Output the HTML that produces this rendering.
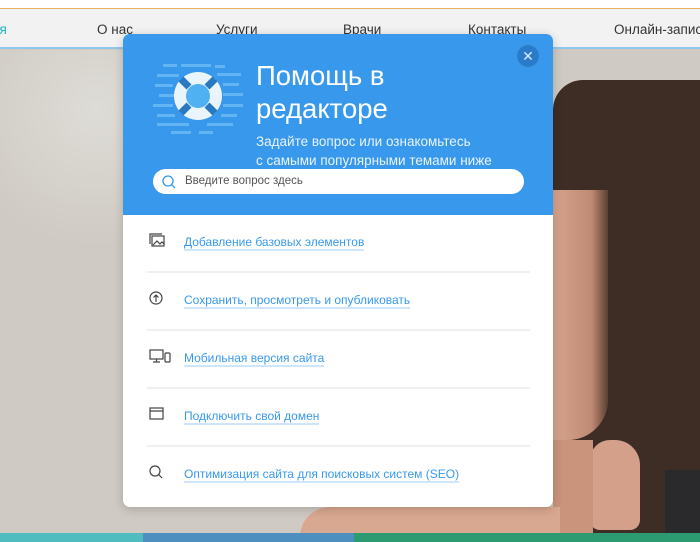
<!DOCTYPE html>
<html><head><meta charset="utf-8"><style>
*{margin:0;padding:0;box-sizing:border-box}
body{width:700px;height:542px;overflow:hidden;position:relative;font-family:"Liberation Sans",Arial,sans-serif;background:#cfcac3}
.abs{position:absolute}
.nav{left:0;top:8px;width:700px;height:41px;background:#f2f2f2;border-top:1px solid #e8b060;border-bottom:2px solid #8fc8ee;font-family:"Liberation Sans",sans-serif;font-size:13.5px;color:#333;white-space:nowrap}
.nav span{position:absolute;top:13px}
.modal{left:123px;top:34px;width:430px;height:473px;background:#fff;border-radius:7px;overflow:hidden;box-shadow:0 2px 10px rgba(0,0,0,.2)}
.hd{left:0;top:0;width:430px;height:181px;background:#3899ec}
.t1{left:133px;top:25px;color:#fff;font-size:27.5px;line-height:33px;font-weight:300}
.t2{left:133px;top:98px;color:#e8f3fd;font-size:13.5px;line-height:19px}
.srch{left:30px;top:135px;width:371px;height:25px;background:#fff;border-radius:13px}
.srch span{position:absolute;left:32px;top:6px;font-size:11.5px;color:#555}
.close{left:394px;top:11px;width:22px;height:22px;border-radius:50%;background:#2a7ccb;color:#dbeafa;text-align:center;font-size:14px;line-height:22px}
.item{left:24px;width:383px;height:58px;border-bottom:2px solid #f0f0f0}
.item a{position:absolute;left:37px;top:20px;color:#3899ec;font-size:12px;text-decoration:none;border-bottom:2px solid #cfe5fa;line-height:14px;white-space:nowrap}
.item svg{position:absolute;left:2px;top:18px}
</style></head><body>
<div class="abs" style="left:0;top:0;width:700px;height:9px;background:#fff"></div>
<div class="abs" style="left:0;top:50px;width:240px;height:200px;background:radial-gradient(ellipse at 40% 30%,#dedcd7,#cfcac3 70%)"></div>
<div class="abs" style="left:553px;top:80px;width:160px;height:460px;background:#3e2d25;border-top-left-radius:30px"></div>
<div class="abs" style="left:553px;top:190px;width:55px;height:250px;background:linear-gradient(90deg,#d6a48e,#c08a74 70%,#5b4032);border-bottom-right-radius:40px"></div>
<div class="abs" style="left:590px;top:440px;width:50px;height:90px;background:#d5a08a;border-radius:20px 25px 10px 10px"></div>
<div class="abs" style="left:553px;top:440px;width:40px;height:100px;background:#c9937c"></div>
<div class="abs" style="left:300px;top:507px;width:260px;height:30px;background:#d8a890;border-top-left-radius:60px"></div>
<div class="abs" style="left:665px;top:470px;width:35px;height:70px;background:#2a2a2c"></div>
<div class="abs" style="left:0;top:533px;width:143px;height:9px;background:#4fbdc0"></div>
<div class="abs" style="left:143px;top:533px;width:211px;height:9px;background:#4d8fbf"></div>
<div class="abs" style="left:354px;top:533px;width:346px;height:9px;background:#2c9b72"></div>
<div class="abs nav">
<span style="left:-8px;color:#1eb6c4">ая</span>
<span style="left:97px">О нас</span>
<span style="left:216px">Услуги</span>
<span style="left:343px">Врачи</span>
<span style="left:468px">Контакты</span>
<span style="left:614px">Онлайн-запись</span>
</div>
<div class="abs modal">
<div class="abs hd">
<svg class="abs" style="left:30px;top:25px" width="90" height="80" viewBox="0 0 90 80">
<g fill="#62b5f2">
<rect x="10" y="5" width="14" height="3"/><rect x="28" y="5" width="30" height="3"/><rect x="62" y="6" width="10" height="3"/>
<rect x="4" y="15" width="22" height="3"/><rect x="64" y="14" width="24" height="3"/>
<rect x="2" y="25" width="18" height="3"/><rect x="70" y="24" width="16" height="3"/>
<rect x="6" y="35" width="16" height="3"/><rect x="70" y="34" width="20" height="3"/>
<rect x="0" y="45" width="20" height="3"/><rect x="70" y="45" width="20" height="3"/>
<rect x="4" y="55" width="18" height="3"/><rect x="68" y="55" width="16" height="3"/>
<rect x="4" y="64" width="32" height="3"/><rect x="54" y="64" width="26" height="3"/>
<rect x="18" y="72" width="20" height="3"/><rect x="46" y="72" width="14" height="3"/>
</g>
<circle cx="45" cy="37" r="24" fill="#e9f4fd"/>
<circle cx="45" cy="37" r="12" fill="#4fb1f2"/>
<g stroke="#2a78c2" stroke-width="7"><line x1="28" y1="20" x2="36" y2="28"/><line x1="62" y1="20" x2="54" y2="28"/><line x1="28" y1="54" x2="36" y2="46"/><line x1="62" y1="54" x2="54" y2="46"/></g>
</svg>
<div class="abs t1">Помощь в<br>редакторе</div>
<div class="abs t2">Задайте вопрос или ознакомьтесь<br>с самыми популярными темами ниже</div>
<div class="abs srch"><svg class="abs" style="left:9px;top:6px" width="14" height="14" viewBox="0 0 14 14"><circle cx="6" cy="6" r="5" fill="none" stroke="#3899ec" stroke-width="1.3"/><line x1="9.6" y1="9.6" x2="13" y2="13" stroke="#3899ec" stroke-width="1.3"/></svg><span>Введите вопрос здесь</span></div>
<div class="abs close">✕</div>
</div>
<div class="abs item" style="top:181px"><svg width="16" height="14" viewBox="0 0 16 14" fill="none" stroke="#444" stroke-width="1.2"><rect x="3" y="3" width="12" height="10"/><path d="M1 11V1h12"/><path d="M4 12l4-4 3 3 2-2 2 2"/></svg><a>Добавление базовых элементов </a></div>
<div class="abs item" style="top:239px"><svg width="14" height="14" viewBox="0 0 14 14" fill="none" stroke="#444" stroke-width="1.2"><circle cx="7" cy="7" r="6"/><path d="M7 11V4M4.5 6.5L7 4l2.5 2.5"/></svg><a>Сохранить, просмотреть и опубликовать</a></div>
<div class="abs item" style="top:297px"><svg width="22" height="14" viewBox="0 0 22 14" fill="none" stroke="#444" stroke-width="1.2"><rect x="1" y="1" width="13" height="9"/><path d="M7.5 10v3M4 13h7"/><rect x="16" y="4" width="5" height="9" rx="1"/></svg><a>Мобильная версия сайта</a></div>
<div class="abs item" style="top:355px"><svg width="15" height="14" viewBox="0 0 15 14" fill="none" stroke="#444" stroke-width="1.2"><rect x="1" y="1" width="13" height="11"/><path d="M1 4h13"/></svg><a>Подключить свой домен</a></div>
<div class="abs item" style="top:413px;border:none"><svg width="14" height="14" viewBox="0 0 14 14" fill="none" stroke="#444" stroke-width="1.2"><circle cx="6" cy="6" r="5"/><path d="M9.6 9.6L13 13"/></svg><a>Оптимизация сайта для поисковых систем (SEO)</a></div>
</div>
</body></html>
